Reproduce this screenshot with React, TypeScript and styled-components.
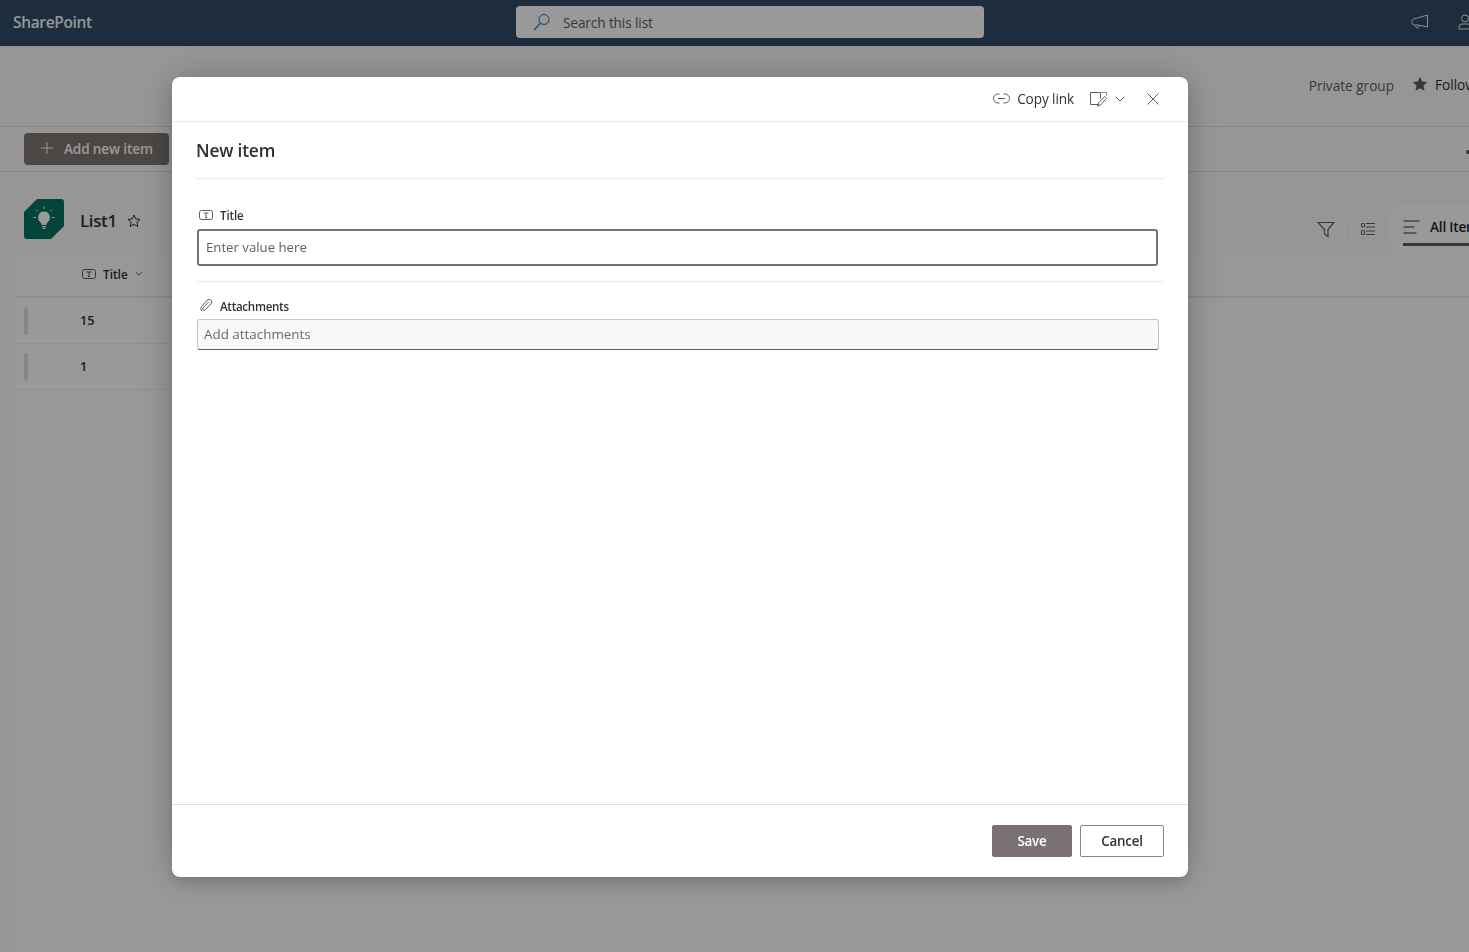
import React from "react";
import styled, { createGlobalStyle } from "styled-components";

const font = `"Open Sans", "Noto Sans", "Liberation Sans", sans-serif`;

const Global = createGlobalStyle`
  html, body { margin: 0; padding: 0; height: 100%; overflow: hidden; background: #fff; }
  body { font-family: ${font}; }
  * { box-sizing: border-box; }
`;

const Page = styled.div`
  width: 1469px; height: 952px; overflow: hidden; display: flex; flex-direction: column; background: #fbfbfb; color: #323130;
`;
const SuiteBar = styled.header`
  height: 46px; flex: none; background: #324b66; display: grid; grid-template-columns: 516px 468px 1fr; align-items: start;
`;
const Brand = styled.div`
  padding: 11px 0 0 13px; color: #f2fbff; font-size: 15.5px; line-height: 22px; font-weight: 600; letter-spacing: -0.35px;
`;
const Search = styled.div`
  height: 32px; margin-top: 6px; background: #fff; border-radius: 4px; display: flex; align-items: center; padding-left: 17px; gap: 12px;
  font-size: 13.6px; color: #605e5c;
  letter-spacing: -0.1px;
`;
const SuiteIcons = styled.div`
  display: flex; justify-content: flex-end; gap: 27px; margin: 14px -5px 0 0; color: #e8eef2;
`;
const Hub = styled.div`
  height: 81px; flex: none; border-bottom: 1px solid #dfdfdf; display: flex; justify-content: flex-end; align-items: center;
  padding-bottom: 2px; margin-right: -40px; gap: 18px; font-size: 13.6px;
`;
const Muted = styled.span` color: #605e5c; `;
const Follow = styled.span`
  display: flex; align-items: center; gap: 7px; color: #323130; width: 97px; font-size: 13.6px; margin-top: -2px; white-space: nowrap;
`;
const CommandBar = styled.div`
  height: 45px; flex: none; border-bottom: 1px solid #dfdfdf; padding: 6px 0 0 24px; display: flex; justify-content: space-between;
`;
const AddButton = styled.div`
  width: 145px; height: 32px; border-radius: 4px; background: #7f7773; color: #fff; font-size: 13.6px; font-weight: 600;
  display: flex; align-items: center; gap: 10px; padding: 0 0 2px 16px; letter-spacing: -0.15px;
`;
const Dot = styled.span`
  width: 4px; height: 4px; border-radius: 50%; background: #605e5c; margin: 17px -1px 0 0;
`;
const ListHead = styled.div`
  height: 80px; flex: none; display: flex; align-items: flex-start; padding: 27px 0 0 24px;
`;
const ListLogo = styled.div`
  width: 40px; height: 40px; flex: none;
`;
const ListName = styled.span`
  margin: 10px 0 0 16px; font-size: 17px; font-weight: 600; color: #323130; letter-spacing: -0.4px;
`;
const ListStar = styled.span` margin: 15px 0 0 10px; display: flex; `;
const ViewTools = styled.div`
  margin-left: auto; display: flex; align-items: center; height: 45px; margin-top: 7px; padding-top: 1px;
`;
const Sep = styled.span` width: 1px; height: 22px; background: #f0f0f0; margin: 0 12px; `;
const ViewTab = styled.div`
  width: 79px; height: 45px; margin: -1px 0 0 14px; background: #fff; border-radius: 8px 0 0 8px; padding: 12px 0 0 13px;
  display: flex; flex-direction: column; overflow: hidden;
`;
const ViewLabel = styled.div`
  display: flex; align-items: center; gap: 10px; font-size: 13.6px; line-height: 18px; font-weight: 600; color: #242424; white-space: nowrap; letter-spacing: -0.2px;
`;
const ViewLine = styled.div` height: 2.500px; background: #605e5c; margin-top: 7px; `;
const Table = styled.div`
  flex: 1; margin-left: 16px; background: #fff; border-radius: 8px 0 0 0;
`;
const HeadRow = styled.div`
  height: 46px; border-bottom: 2px solid #e8e8e8; background: #fdfdfd; border-radius: 8px 0 0 0; display: flex; align-items: center; padding-left: 66px;
  gap: 7px; font-size: 11.800px; font-weight: 600; color: #323130;
`;
const Row = styled.div`
  width: 700px; height: 46px; border-bottom: 1px solid #efefef; display: flex; align-items: center; padding-left: 8px; font-size: 12.600px; font-weight: 600; color: #323130;
`;
const Handle = styled.span`
  width: 4px; height: 28px; border-radius: 2px; background: #dedede; margin-right: 52px;
`;
const Overlay = styled.div`
  position: fixed; inset: 0; background: rgba(0,0,0,0.4); padding: 77px 0 0 172px;
`;
const Dialog = styled.div`
  width: 1016px; height: 800px; background: #fff; border-radius: 8px; display: flex; flex-direction: column;
  box-shadow: 0 0 40px rgba(0,0,0,0.22), 0 6px 14px rgba(0,0,0,0.12);
`;
const DialogTop = styled.div`
  height: 45px; flex: none; border-bottom: 1px solid #edebe9; display: flex; align-items: center; justify-content: flex-end; padding-right: 29px;
  font-size: 13.6px; color: #323130;
`;
const CopyLink = styled.span` display: flex; align-items: center; gap: 7px; margin: -2px 16px 0 0; letter-spacing: -0.1px; `;
const FormIcon = styled.span` display: flex; align-items: center; gap: 8px; margin-right: 22px; `;
const Body = styled.div`
  flex: 1; padding: 0 24px; display: flex; flex-direction: column;
`;
const Heading = styled.h1`
  margin: 0; height: 57px; border-bottom: 1px solid #edebe9; font-size: 17.400px; font-weight: 600; color: #323130; padding-top: 15px; line-height: 26px; letter-spacing: -0.2px;
`;
const FieldLabel = styled.div<{ $top: number }>`
  margin-top: ${p => p.$top}px; height: 16px; display: flex; align-items: center; font-size: 11.600px; font-weight: 600; color: #323130; padding-left: 3px; gap: 7px; letter-spacing: -0.15px;
`;
const AttachLabel = styled(FieldLabel)` letter-spacing: -0.3px; `;
const TitleInput = styled.div`
  height: 37px; margin: 6px 6px 0 1px; border: 2px solid #767170; border-radius: 3px; background: #fff; display: flex; align-items: center; padding: 0 0 2px 7px;
  font-size: 13.2px; color: #605e5c;
`;
const Divider = styled.div` height: 1px; background: #edebe9; margin-top: 15px; `;
const AttachBox = styled.div`
  height: 31px; margin: 5px 5px 0 1px; border: 1px solid #c8c6c4; border-bottom-color: #605e5c; border-radius: 3px; background: #faf9f8;
  display: flex; align-items: center; padding: 0 0 2px 6px; font-size: 13.4px; color: #6b6866;
`;
const Footer = styled.div`
  height: 73px; flex: none; border-top: 1px solid #e1dfdd; display: flex; justify-content: flex-end; gap: 8px; padding: 20px 24px 0 0;
`;
const Button = styled.div<{ $primary?: boolean }>`
  height: 32px; width: ${p => (p.$primary ? 80 : 84)}px; border-radius: 2px; display: flex; align-items: center; justify-content: center;
  font-size: 13.400px; font-weight: 600; letter-spacing: -0.2px;
  background: ${p => (p.$primary ? "#7a7272" : "#fff")};
  color: ${p => (p.$primary ? "#fff" : "#323130")};
  border: 1px solid ${p => (p.$primary ? "#7a7272" : "#8a8886")};
`;

const Stroke = styled.svg` display: block; flex: none; fill: none; stroke: currentColor; stroke-width: 1; `;

const TextIcon = () => (
  <Stroke width={14} height={10} viewBox="0 0 14 10" style={{ color: "#605e5c" }}>
    <rect x=".5" y=".5" width="13" height="9" rx="2" />
    <path d="M4.500 3h5M7 3v4.500M6 7.500h2" />
  </Stroke>
);

export default function App() {
  return (
    <Page>
      <Global />
      <SuiteBar>
        <Brand>SharePoint</Brand>
        <Search>
          <Stroke width="18" height="18" viewBox="0 0 18 18" style={{ color: "#1a6fb0" }}>
            <circle cx="11" cy="6.500" r="5" />
            <path d="M7.500 10.200 1 17" strokeWidth="1.200" />
          </Stroke>
          Search this list
        </Search>
        <SuiteIcons>
          <Stroke width="18" height="16" viewBox="0 0 18 16">
            <path d="M16.500 1v12L7 11H3.500A2.500 2.500 0 0 1 1 8.500V7a2 2 0 0 1 1.200-1.800zM4.500 11l.6 2.200a1.500 1.500 0 0 0 2.900-.5V11.200" />
          </Stroke>
          <Stroke width="18" height="16" viewBox="0 0 18 16">
            <circle cx="9" cy="4.500" r="3.500" />
            <path d="M3 15v-2a3 3 0 0 1 3-3h6a3 3 0 0 1 3 3v2z" />
          </Stroke>
        </SuiteIcons>
      </SuiteBar>
      <Hub>
        <Muted>Private group</Muted>
        <Follow>
          <svg width="16" height="16" viewBox="0 0 16 16"><path fill="#605e5c" d="m8 .8 2.200 4.700 5.100.6-3.800 3.500 1 5.100L8 12.200l-4.500 2.500 1-5.100L.7 6.100l5.100-.6z" /></svg>
          Follow
        </Follow>
      </Hub>
      <CommandBar>
        <AddButton>
          <Stroke width="14" height="14" viewBox="0 0 14 14"><path d="M7 1v12M1 7h12" /></Stroke>
          Add new item
        </AddButton>
        <Dot />
      </CommandBar>
      <ListHead>
        <ListLogo>
          <svg width="40" height="40" viewBox="0 0 40 40">
            <path fill="#077460" d="M13 0h24a3 3 0 0 1 3 3v24L27 40H3a3 3 0 0 1-3-3V13z" />
            <path fill="#fff" d="M20 12.500a6 6 0 0 0-3.400 10.900c.7.5 1 1.200 1 2v.6h4.800v-.6c0-.8.3-1.500 1-2A6 6 0 0 0 20 12.500zM18 27h4v1.200h-4zM18.600 29h2.800v1h-2.800z" />
            <path stroke="#fff" strokeWidth="1" d="M20 7.500v2.500M12 10.500l2 2M28 10.500l-2 2M9.500 18.500H12M28 18.500h2.500" />
          </svg>
        </ListLogo>
        <ListName>List1</ListName>
        <ListStar>
          <Stroke width="14" height="14" viewBox="0 0 14 14" style={{ color: "#323130" }}>
            <path d="m7 1 1.800 3.900 4.200.5-3.100 2.900.8 4.200L7 10.400l-3.700 2.100.8-4.200L1 5.400l4.200-.5z" />
          </Stroke>
        </ListStar>
        <ViewTools>
          <Stroke width="18" height="17" viewBox="0 0 18 17" style={{ color: "#605e5c" }}>
            <path d="M1 1.500h16L11 8.500v7L7.500 13V8.500z" strokeWidth="1.200" />
          </Stroke>
          <Sep />
          <Stroke width="16" height="16" viewBox="0 0 16 16" style={{ color: "#605e5c" }}>
            <rect x="1.500" y="2.500" width="3" height="3.500" rx=".5" />
            <rect x="1.500" y="9.500" width="3" height="4" rx=".5" />
            <path d="M6 2.500h9M6 6h9M6 10h9M6 13.500h9" />
          </Stroke>
          <ViewTab>
            <ViewLabel>
              <Stroke width="17" height="14" viewBox="0 0 17 14" style={{ color: "#323130" }}>
                <path d="M.5 1h16M.5 7h11M.5 13h13" />
              </Stroke>
              All Items
            </ViewLabel>
            <ViewLine />
          </ViewTab>
        </ViewTools>
      </ListHead>
      <Table>
        <HeadRow>
          <TextIcon />
          <span>Title</span>
          <Stroke width="8" height="6" viewBox="0 0 8 6" style={{ color: "#605e5c" }}><path d="m.8 1 3.200 3.200L7.200 1" /></Stroke>
        </HeadRow>
        <Row><Handle />15</Row>
        <Row><Handle />1</Row>
      </Table>
      <Overlay>
        <Dialog>
          <DialogTop>
            <CopyLink>
              <Stroke width="17" height="11" viewBox="0 0 17 11" style={{ color: "#605e5c" }}>
                <path d="M6.500 1H5a4.500 4.500 0 0 0 0 9h1.500M10.500 1H12a4.500 4.500 0 0 1 0 9h-1.500M5 5.500h7" />
              </Stroke>
              Copy link
            </CopyLink>
            <FormIcon>
              <Stroke width="17" height="16" viewBox="0 0 17 16" style={{ color: "#605e5c" }}>
                <path d="M9 13.500H.5v-12h10v6" />
                <path d="M11.500 1.500h5v3" stroke="#6f9a6a" />
                <path d="M14.500 5.500 16.500 7.500 10.500 14 7.500 15 8.500 12z" />
              </Stroke>
              <Stroke width="10" height="6" viewBox="0 0 10 6" style={{ color: "#605e5c" }}><path d="m.8.8 4.200 4.200L9.200.8" /></Stroke>
            </FormIcon>
            <Stroke width="12" height="12" viewBox="0 0 12 12" style={{ color: "#4f5f5a" }}><path d="M.5.5l11 11M11.500.5l-11 11" /></Stroke>
          </DialogTop>
          <Body>
            <Heading>New item</Heading>
            <FieldLabel $top={28}><TextIcon />Title</FieldLabel>
            <TitleInput>Enter value here</TitleInput>
            <Divider />
            <AttachLabel $top={16}>
              <Stroke width="14" height="14" viewBox="0 0 14 14" style={{ color: "#605e5c" }}>
                <path d="M9.500 3 4 9a1.500 1.500 0 0 0 2.200 2l6-6.500A2.600 2.600 0 0 0 8.400 1L2.500 7.500a4 4 0 0 0 .2 4.600" />
              </Stroke>
              Attachments
            </AttachLabel>
            <AttachBox>Add attachments</AttachBox>
          </Body>
          <Footer>
            <Button $primary>Save</Button>
            <Button>Cancel</Button>
          </Footer>
        </Dialog>
      </Overlay>
    </Page>
  );
}
